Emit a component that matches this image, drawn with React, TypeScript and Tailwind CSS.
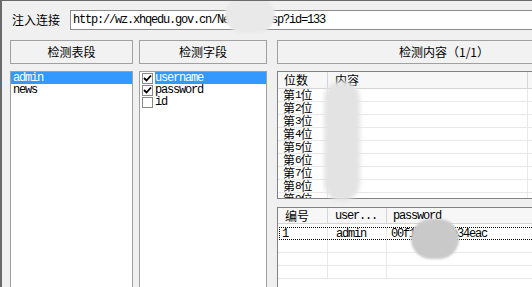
import React from 'react';

const cn = '"Noto Sans CJK SC", "Liberation Sans", sans-serif';

function Mono({ children, className = '' }: { children: React.ReactNode; className?: string }) {
    return (
        <span className={"font-['Liberation_Mono','DejaVu_Sans_Mono',monospace] tracking-[-1.2px] " + className}>
            {children}
        </span>
    );
}

function Check() {
    return (
        <svg width="9" height="9" viewBox="0 0 9 9">
            <path d="M1 4 L3.5 6.5 L8 1.5" fill="none" stroke="#000" strokeWidth="1.8" />
        </svg>
    );
}

function Btn({ children, className = '' }: { children: React.ReactNode; className?: string }) {
    return (
        <div
            className={
                'h-[24px] shrink-0 border border-[#a0a0a0] bg-[#f2f2f2] flex items-center justify-center text-[12px] text-black ' +
                className
            }
        >
            {children}
        </div>
    );
}

const positions = ['第1位', '第2位', '第3位', '第4位', '第5位', '第6位', '第7位', '第8位', '第9位'];

export default function App() {
    return (
        <div
            className="relative w-[532px] h-[287px] overflow-hidden bg-[#f0f0f0] border-t border-l-2 border-[#6a6a6a] text-[12px] leading-[12px] text-black"
            style={{ fontFamily: cn }}
        >
            {/* url row */}
            <div className="flex items-center h-[38px] pl-[10px] pb-[1px]">
                <span className="w-[58px] shrink-0">注入连接</span>
                <div className="h-[20px] w-[480px] shrink-0 border border-[#8c8c8c] bg-white flex items-center pl-[2px]">
                    <Mono>http://wz.xhqedu.gov.cn/News/Vi.asp?id=133</Mono>
                </div>
            </div>

            {/* buttons */}
            <div className="flex pl-[8px] mt-[1px]">
                <Btn className="w-[123px]">检测表段</Btn>
                <Btn className="w-[128px] ml-[6px]">检测字段</Btn>
                <Btn className="w-[330px] ml-[10px] pl-[4px]">检测内容（1/1）</Btn>
            </div>

            {/* content */}
            <div className="flex pl-[8px] mt-[7px]">
                <div className="w-[123px] h-[230px] shrink-0 border border-[#a0a0a0] bg-white">
                    <div className="h-[12px] bg-[#3399ff] text-white flex items-center pl-[2px]">
                        <Mono>admin</Mono>
                    </div>
                    <div className="h-[12px] flex items-center pl-[2px]">
                        <Mono>news</Mono>
                    </div>
                </div>

                <div className="w-[128px] h-[230px] ml-[6px] shrink-0 border border-[#a0a0a0] bg-white">
                    {[
                        ['username', true, true],
                        ['password', true, false],
                        ['id', false, false],
                    ].map(([name, checked, sel]) => (
                        <div key={name as string} className="h-[12px] flex items-center pl-[2px]">
                            <div className="w-[11px] h-[11px] shrink-0 border border-[#8a8a8a] bg-white flex items-center justify-center">
                                {checked ? <Check /> : null}
                            </div>
                            <div
                                className={
                                    'h-[12px] flex-1 ml-[2px] flex items-center ' +
                                    (sel ? 'bg-[#3399ff] text-white' : '')
                                }
                            >
                                <Mono>{name as string}</Mono>
                            </div>
                        </div>
                    ))}
                </div>

                <div className="w-[330px] ml-[10px] shrink-0 flex flex-col gap-[8px]">
                    {/* table 1 */}
                    <div className="h-[128px] border border-[#828282] bg-white overflow-hidden">
                        <div className="flex h-[17px] bg-[#f7f7f7] border-b border-[#d5d5d5]">
                            <div className="w-[50px] border-r border-[#d5d5d5] pl-[6px] flex items-center">位数</div>
                            <div className="w-[200px] border-r border-[#d5d5d5] pl-[7px] flex items-center">内容</div>
                            <div className="flex-1" />
                        </div>
                        {positions.map((p) => (
                            <div key={p} className="flex h-[13px] border-b border-[#e8e8e8]">
                                <div className="w-[50px] border-r border-[#e8e8e8] pl-[5px] flex items-center">
                                    {p.slice(0, 1)}
                                    <Mono className="text-[11px]">{p.slice(1, 2)}</Mono>
                                    {p.slice(2)}
                                </div>
                                <div className="w-[200px] border-r border-[#e8e8e8]" />
                                <div className="flex-1" />
                            </div>
                        ))}
                    </div>

                    {/* table 2 */}
                    <div className="h-[100px] border border-[#828282] bg-white overflow-hidden">
                        <div className="flex h-[16px] bg-[#f7f7f7] border-b border-[#d5d5d5]">
                            <div className="w-[50px] border-r border-[#d5d5d5] pl-[7px] flex items-center">编号</div>
                            <div className="w-[59px] border-r border-[#d5d5d5] pl-[7px] flex items-center">
                                <Mono>user...</Mono>
                            </div>
                            <div className="flex-1 pl-[6px] flex items-center">
                                <Mono>password</Mono>
                            </div>
                        </div>
                        <div className="pt-[3px]">
                            <div className="flex h-[13px] border border-dotted border-black ml-[1px]">
                                <div className="w-[48px] border-r border-[#e8e8e8] pl-[2px] flex items-center">
                                    <Mono>1</Mono>
                                </div>
                                <div className="w-[59px] border-r border-[#e8e8e8] pl-[8px] flex items-center">
                                    <Mono>admin</Mono>
                                </div>
                                <div className="flex-1 pl-[4px] flex items-center">
                                    <Mono>00f1c8d9b7e34eac</Mono>
                                </div>
                            </div>
                            {[0, 1, 2].map((i) => (
                                <div key={i} className="flex h-[13px] border-b border-[#e8e8e8]">
                                    <div className="w-[50px] border-r border-[#e8e8e8]" />
                                    <div className="w-[59px] border-r border-[#e8e8e8]" />
                                    <div className="flex-1" />
                                </div>
                            ))}
                        </div>
                    </div>
                </div>
            </div>

            {/* privacy smudges laid over the content */}
            <div className="absolute left-[223px] top-[-4px] w-[50px] h-[36px] rounded-full bg-[#e9e9e9] blur-[1px]" />
            <div className="absolute left-[322px] top-[80px] w-[36px] h-[120px] rounded-[18px] bg-[#e3e3e3] blur-[2px]" />
            <div className="absolute left-[409px] top-[218px] w-[48px] h-[40px] rounded-full bg-[#c9c9c9] blur-[1px]" />
        </div>
    );
}
